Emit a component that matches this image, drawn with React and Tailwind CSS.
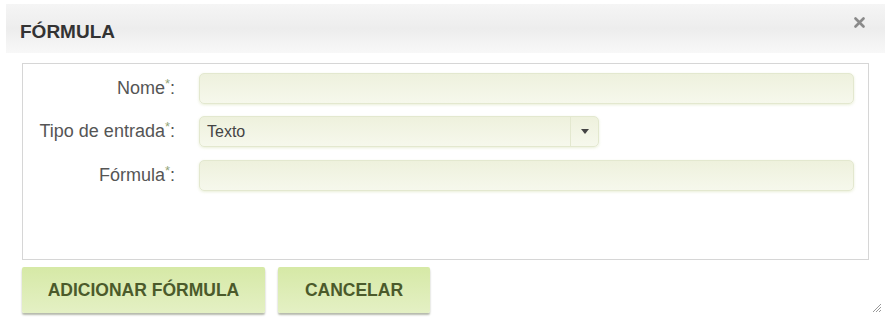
import React from "react";

const fieldCls =
  "h-[31px] rounded-[5px] border border-[#e3e8cf] bg-gradient-to-b from-[#eef1dd] to-[#f6f8ec] shadow-[0_1px_3px_rgba(220,228,190,0.6)]";

function Label({ text }) {
  return (
    <label className="w-[152px] shrink-0 text-right text-[18px] text-[#555] whitespace-nowrap">
      {text}
      <sup className="text-[#93a57a] text-[13px]">*</sup>:
    </label>
  );
}

export default function App() {
  return (
    <div
      className="relative w-[891px] h-[335px] bg-white"
      style={{ fontFamily: "'Liberation Sans', Arial, sans-serif" }}
    >
      <div className="pt-[4px] px-[6px]">
        <div className="h-[49px] flex items-center justify-between pl-[14px] pr-[20px] bg-gradient-to-b from-[#f5f5f5] via-[#ededed] to-[#f8f8f8]">
          <h2 className="mt-[7px] text-[19px] font-bold text-[#333]">FÓRMULA</h2>
          <svg className="-mt-[12px]" width="11" height="11" viewBox="0 0 11 11">
            <path d="M1.5 1.5 L9.5 9.5 M9.5 1.5 L1.5 9.5" stroke="#8a8a8a" strokeWidth="2.6" strokeLinecap="round" />
          </svg>
        </div>
      </div>

      <div className="mt-[10px] ml-[22px] w-[847px] h-[197px] border border-[#d6d6d6] bg-white pt-[9px] pr-[14px]">
        <div className="flex items-center gap-[24px]">
          <Label text="Nome" />
          <div className={`flex-1 ${fieldCls}`}></div>
        </div>
        <div className="flex items-center gap-[24px] mt-[12px]">
          <Label text="Tipo de entrada" />
          <div className={`w-[400px] flex items-center ${fieldCls}`}>
            <span className="flex-1 pl-[7px] text-[16px] text-[#444]">Texto</span>
            <span className="w-[28px] h-full flex items-center justify-center border-l border-[#e3e8cf]">
              <svg width="8" height="5" viewBox="0 0 8 5">
                <path d="M0 0 L8 0 L4 5 Z" fill="#444" />
              </svg>
            </span>
          </div>
        </div>
        <div className="flex items-center gap-[24px] mt-[13px]">
          <Label text="Fórmula" />
          <div className={`flex-1 ${fieldCls}`}></div>
        </div>
      </div>

      <div className="flex gap-[13px] ml-[22px] mt-[7px]">
        <button className="w-[243px] h-[46px] rounded-[2px] bg-gradient-to-b from-[#d6e9a6] to-[#e4f0c4] text-[17.5px] font-bold text-[#4b5a2b] shadow-[0_2px_2px_rgba(90,100,70,0.45)]">
          ADICIONAR FÓRMULA
        </button>
        <button className="w-[152px] h-[46px] rounded-[2px] bg-gradient-to-b from-[#d6e9a6] to-[#e4f0c4] text-[17.5px] font-bold text-[#4b5a2b] shadow-[0_2px_2px_rgba(90,100,70,0.45)]">
          CANCELAR
        </button>
      </div>

      <svg className="absolute left-[872px] top-[303px]" width="10" height="10" viewBox="0 0 10 10">
        <path d="M9 1 L1 9 M9 4 L4 9 M9 7 L7 9" stroke="#999" strokeWidth="1" />
      </svg>
    </div>
  );
}
